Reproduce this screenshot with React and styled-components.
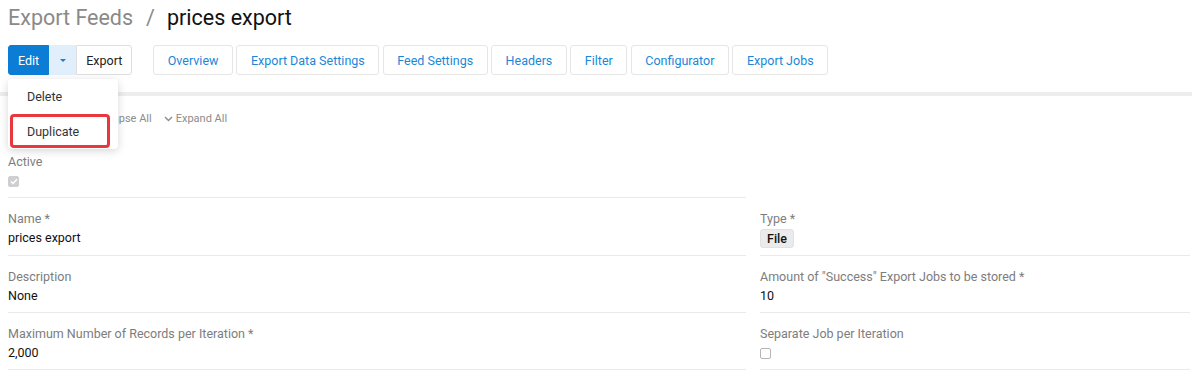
import React from 'react';
import styled, { createGlobalStyle } from 'styled-components';

const GlobalStyle = createGlobalStyle`
    html, body {
        margin: 0;
        padding: 0;
        background: #fff;
    }
    body {
        font-family: Roboto, 'Liberation Sans', Arial, sans-serif;
        font-size: 12.5px;
        color: #111;
    }
`;

const Page = styled.div`
    width: 1192px;
    height: 392px;
    overflow: hidden;
    position: relative;
`;

const Header = styled.div`
    padding: 6px 8px 0;
`;

const Title = styled.h1`
    margin: 0;
    font-size: 21.5px;
    line-height: 24px;
    font-weight: 400;
    color: #111;
    display: flex;
    align-items: center;
`;

const Crumb = styled.span`
    color: #8a8a8a;
`;

const Slash = styled.span`
    color: #8a8a8a;
    margin: 0 12px 0 13px;
`;

const Toolbar = styled.div`
    margin-top: 15px;
    display: flex;
    align-items: stretch;
    height: 30px;
    gap: 21px;
`;

const ActionGroup = styled.div`
    position: relative;
    display: flex;
`;

const ActionButton = styled.button`
    font-family: inherit;
    font-size: 12.5px;
    height: 30px;
    padding: 0 ${({ $pad }) => $pad || 10}px;
    border: 1px solid ${({ $variant }) => ($variant === 'primary' ? '#0b7dd4' : $variant === 'caret' ? '#e1eefb' : '#dedede')};
    background: ${({ $variant }) => ($variant === 'primary' ? '#0b7dd4' : $variant === 'caret' ? '#e1eefb' : '#fff')};
    color: ${({ $variant }) => ($variant === 'primary' ? '#fff' : '#222')};
    border-radius: ${({ $radius }) => $radius || '0'};
    display: flex;
    align-items: center;
    justify-content: center;
    cursor: pointer;
`;

const CaretButton = styled(ActionButton)`
    width: 27px;
    padding: 0;
`;

const Caret = styled.span`
    width: 0;
    height: 0;
    border-left: 3px solid transparent;
    border-right: 3px solid transparent;
    border-top: 3px solid #1a7fd0;
`;

const Tabs = styled.div`
    display: flex;
    gap: 3.5px;
`;

const Tab = styled.button`
    font-family: inherit;
    font-size: 12.5px;
    height: 30px;
    padding: 0 13.5px;
    background: #fff;
    border: 1px solid #e6e6e6;
    border-radius: 3px;
    color: #1a87d8;
    cursor: pointer;
`;

const Menu = styled.div`
    position: absolute;
    top: 34px;
    left: 0;
    width: 110px;
    background: #fff;
    border-radius: 4px;
    box-shadow: 0 2px 8px rgba(0, 0, 0, 0.16);
    z-index: 5;
`;

const MenuItem = styled.div`
    position: relative;
    height: 35px;
    line-height: 35px;
    padding-left: 19px;
    color: #333;
    font-size: 12.5px;
    ${({ $highlighted }) =>
        $highlighted &&
        `
        &::after {
            content: '';
            position: absolute;
            left: 2px;
            right: 8px;
            top: 0;
            bottom: 1px;
            border: 3px solid #e8383d;
            border-radius: 4px;
        }
    `}
`;

const Divider = styled.div`
    margin-top: 17px;
    height: 4px;
    background: #ededed;
`;

const Content = styled.div`
    padding: 0 2px 0 8px;
`;

const ToggleRow = styled.div`
    margin-top: 16px;
    padding-left: 74px;
    display: flex;
    gap: 12px;
    height: 13px;
    align-items: center;
`;

const ToggleLink = styled.span`
    display: flex;
    align-items: center;
    gap: 3px;
    font-size: 11px;
    color: #8c8c8c;
`;

const Grid = styled.div`
    margin-top: 29px;
    display: grid;
    grid-template-columns: 738px 1fr;
    column-gap: 14px;
`;

const Field = styled.div`
    grid-column: ${({ $col }) => $col};
    padding: ${({ $first }) => ($first ? '0 0 8px' : '13px 0 8px')};
    border-bottom: 1px solid #e9e9e9;
    display: flex;
    flex-direction: column;
    gap: 3px;
`;

const Label = styled.div`
    color: #7d7d7d;
    font-size: 12.5px;
    line-height: 16px;
`;

const Value = styled.div`
    color: #111;
    font-size: 12.5px;
    line-height: 16px;
    min-height: 16px;
    display: flex;
    align-items: center;
`;

const Badge = styled.span`
    display: inline-block;
    box-sizing: border-box;
    margin: -1px 0 -1px;
    padding: 0 6px;
    height: 19px;
    line-height: 17px;
    background: #ebebeb;
    border: 1px solid #e2e2e2;
    border-radius: 3px;
    font-weight: 500;
    color: #111;
`;

const Check = styled.span`
    width: 11px;
    height: 11px;
    box-sizing: border-box;
    border-radius: 2px;
    display: inline-flex;
    align-items: center;
    justify-content: center;
    background: ${({ $checked }) => ($checked ? '#cfcfd2' : '#fff')};
    border: 1px solid ${({ $checked }) => ($checked ? '#cfcfd2' : '#b5b5b5')};
`;

const Chevron = () => (
    <svg width="9" height="6" viewBox="0 0 9 6">
        <path d="M1 1l3.5 3.5L8 1" fill="none" stroke="#8c8c8c" strokeWidth="1.4" />
    </svg>
);

const Checkbox = ({ checked }) => (
    <Check $checked={checked}>
        {checked && (
            <svg width="8" height="7" viewBox="0 0 8 7">
                <path d="M1 3.5l2 2L7 1.2" fill="none" stroke="#fff" strokeWidth="1.4" />
            </svg>
        )}
    </Check>
);

const tabs = ['Overview', 'Export Data Settings', 'Feed Settings', 'Headers', 'Filter', 'Configurator', 'Export Jobs'];

export default function App() {
    return (
        <Page>
            <GlobalStyle />
            <Header>
                <Title>
                    <Crumb>Export Feeds</Crumb>
                    <Slash>/</Slash>
                    <span>prices export</span>
                </Title>
                <Toolbar>
                    <ActionGroup>
                        <ActionButton $variant="primary" $pad={9} $radius="3px 0 0 3px">
                            Edit
                        </ActionButton>
                        <CaretButton $variant="caret">
                            <Caret />
                        </CaretButton>
                        <ActionButton $pad={9} $radius="0 3px 3px 0">
                            Export
                        </ActionButton>
                        <Menu>
                            <MenuItem>Delete</MenuItem>
                            <MenuItem $highlighted>Duplicate</MenuItem>
                        </Menu>
                    </ActionGroup>
                    <Tabs>
                        {tabs.map(t => (
                            <Tab key={t}>{t}</Tab>
                        ))}
                    </Tabs>
                </Toolbar>
            </Header>
            <Divider />
            <Content>
                <ToggleRow>
                    <ToggleLink>
                        <Chevron />
                        Collapse All
                    </ToggleLink>
                    <ToggleLink>
                        <Chevron />
                        Expand All
                    </ToggleLink>
                </ToggleRow>
                <Grid>
                    <Field $col={1} $first>
                        <Label>Active</Label>
                        <Value>
                            <Checkbox checked />
                        </Value>
                    </Field>
                    <Field $col={1}>
                        <Label>Name *</Label>
                        <Value>prices export</Value>
                    </Field>
                    <Field $col={2}>
                        <Label>Type *</Label>
                        <Value>
                            <Badge>File</Badge>
                        </Value>
                    </Field>
                    <Field $col={1}>
                        <Label>Description</Label>
                        <Value>None</Value>
                    </Field>
                    <Field $col={2}>
                        <Label>Amount of "Success" Export Jobs to be stored *</Label>
                        <Value>10</Value>
                    </Field>
                    <Field $col={1}>
                        <Label>Maximum Number of Records per Iteration *</Label>
                        <Value>2,000</Value>
                    </Field>
                    <Field $col={2}>
                        <Label>Separate Job per Iteration</Label>
                        <Value>
                            <Checkbox />
                        </Value>
                    </Field>
                </Grid>
            </Content>
        </Page>
    );
}
